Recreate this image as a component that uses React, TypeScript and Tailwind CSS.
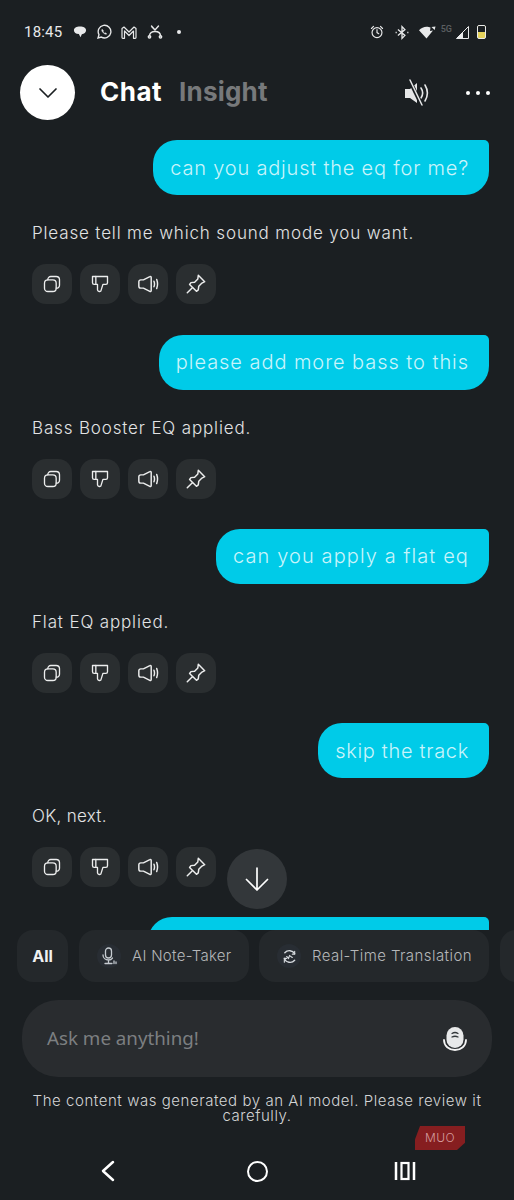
import type { ReactNode } from "react";

const messages = [
  { question: "can you adjust the eq for me?", answer: "Please tell me which sound mode you want.", fit: "tracking-[0.8px]", answerFit: "tracking-[0.85px]" },
  { question: "please add more bass to this", answer: "Bass Booster EQ applied.", fit: "tracking-[0.95px]", answerFit: "tracking-[0.85px]" },
  { question: "can you apply a flat eq", answer: "Flat EQ applied.", fit: "tracking-[1.1px]", answerFit: "tracking-[0.85px]" },
  { question: "skip the track", answer: "OK, next.", fit: "tracking-[0.7px]", answerFit: "tracking-[0.3px]" },
];

function Icon({ size = 20, children }: { size?: number; children: ReactNode }) {
  return (
    <svg
      width={size}
      height={size}
      viewBox="0 0 24 24"
      fill="none"
      stroke="currentColor"
      strokeWidth="1.6"
      strokeLinecap="round"
      strokeLinejoin="round"
    >
      {children}
    </svg>
  );
}

function StatusBar() {
  return (
    <div className="flex h-[65px] items-start justify-between pl-[24px] pr-[28px] pt-[23px] text-[#e8e9ea]">
      <div className="flex h-[18px] items-center">
        <span className="w-[40px] font-['Roboto',sans-serif] text-[15px] leading-[18px] font-normal tracking-[0.2px]">18:45</span>
        <svg width="14" height="14" viewBox="0 0 15 14" fill="currentColor" className="ml-[9px]">
          <path d="M1 5c0-2.600 2.700-4 6.500-4S14 2.500 14 5s-2 4-4.500 4.300L8 12.500 6.300 9.200C3 9 1 7.500 1 5z" />
        </svg>
        <svg width="16" height="16" viewBox="0 0 24 24" fill="none" stroke="currentColor" strokeWidth="2" className="ml-[9px]">
          <path d="M3 21l1.500-5A9.500 9.500 0 1 1 8 19.600L3 21z" />
          <path d="M9 8c-1 1 0 3.500 1.800 5.200S15 16 16 15l-1.700-1.800-1.300.7c-1-.5-1.900-1.400-2.400-2.400l.7-1.300L9 8z" fill="currentColor" strokeWidth="0.8" />
        </svg>
        <svg width="16" height="13" viewBox="0 0 16 13" fill="none" stroke="currentColor" strokeWidth="1.200" strokeLinejoin="round" className="ml-[9px]">
          <path d="M1 2.500L3 1l5 5 5-5 2 1.500V11.500a.8.8 0 0 1-.8.8H12.500V5L8 9.500 3.500 5v7.300H1.800a.8.8 0 0 1-.8-.8z" />
        </svg>
        <svg width="16" height="14" viewBox="0 0 16 14" fill="none" stroke="currentColor" strokeWidth="1.400" strokeLinecap="round" className="ml-[10px]">
          <path d="M4.500 1l3.500 4 3.500-4M8 5L5 2" />
          <path d="M2.500 11c0-3 2.500-4.500 5.500-4.500S13.500 8 13.500 11" />
          <circle cx="2.500" cy="11.800" r="1.200" />
          <circle cx="13.500" cy="11.800" r="1.200" />
        </svg>
        <span className="ml-[14px] h-[4px] w-[4px] rounded-full bg-[#e8e9ea]" />
      </div>
      <div className="flex h-[18px] items-center">
        <svg width="14" height="14" viewBox="0 0 24 24" fill="none" stroke="currentColor" strokeWidth="2" strokeLinecap="round">
          <circle cx="12" cy="13" r="8.500" />
          <path d="M12 8v5l3 2M2.500 6L6 2.500M21.500 6L18 2.500" />
        </svg>
        <svg width="14" height="15" viewBox="0 0 24 24" fill="none" stroke="currentColor" strokeWidth="2.200" className="ml-[11px]">
          <path d="M5 7l12 10-5 5V2l5 5L5 17" />
          <path d="M1 12h2M21 12h2" />
        </svg>
        <svg width="17" height="13" viewBox="0 0 17 13" fill="currentColor" className="ml-[10px]">
          <path d="M0 4.200C2 2 5 .8 7.500.8c1.500 0 3 .2 4 .7L11 5l3-.5L7.500 12.500 0 4.200z" />
          <path d="M12.500 1l4-.5-.8 3.500z" />
        </svg>
        <span className="mb-[6px] ml-[5px] font-['Roboto',sans-serif] text-[9px] leading-[10px] font-medium text-[#5d6062]">5G</span>
        <svg width="13" height="13" viewBox="0 0 13 13" className="ml-[4px]">
          <path d="M12.500 .5V12.500H.5z" fill="none" stroke="currentColor" strokeWidth="1" />
          <path d="M7 12.500V6L.5 12.500z" fill="currentColor" />
        </svg>
        <div className="ml-[8px] flex h-[14px] w-[9px] flex-col overflow-hidden rounded-[2px] border border-[#e8e9ea] bg-[#e5d25b]">
          <div className="h-[6px] bg-[#1b1f22]" />
        </div>
      </div>
    </div>
  );
}

function Header() {
  return (
    <div className="flex h-[55px] items-center pl-[20px] pr-[24px]">
      <div className="flex h-[55px] w-[55px] items-center justify-center rounded-full bg-white text-[#1b1f22]">
        <svg width="20" height="12" viewBox="0 0 20 12" fill="none" stroke="currentColor" strokeWidth="1.700" strokeLinecap="round" strokeLinejoin="round">
          <path d="M2 2l8 8 8-8" />
        </svg>
      </div>
      <span className="mb-[2px] ml-[25px] text-[26px] leading-[30px] font-bold tracking-[0.5px] text-white">Chat</span>
      <span className="mb-[2px] ml-[17px] text-[26px] leading-[30px] font-bold tracking-[0.2px] text-[#77797b]">Insight</span>
      <svg width="30" height="30" viewBox="0 0 30 30" fill="none" className="ml-auto text-[#e6e7e8]">
        <path d="M3 11h5l7-6v20l-7-5H3z" fill="currentColor" />
        <path d="M19 10c2 3 2 7 0 10M23 7c3 5 3 11 0 16" stroke="currentColor" strokeWidth="1.600" strokeLinecap="round" />
        <path d="M7 1l13 27" stroke="#1b1f22" strokeWidth="4" />
        <path d="M8 2l12 25" stroke="currentColor" strokeWidth="1.500" strokeLinecap="round" />
      </svg>
      <div className="ml-[34px] flex items-center gap-[6px]">
        <span className="h-[4px] w-[4px] rounded-full bg-white" />
        <span className="h-[4px] w-[4px] rounded-full bg-white" />
        <span className="h-[4px] w-[4px] rounded-full bg-white" />
      </div>
    </div>
  );
}

function ActionRow() {
  const items = [
    <Icon key="copy" size={20}>
      <rect x="3" y="7" width="14" height="14" rx="4" />
      <path d="M7 7V6.500A3.500 3.500 0 0 1 10.500 3H17a4 4 0 0 1 4 4v6.500a3.500 3.500 0 0 1-4 3.500" />
    </Icon>,
    <Icon key="dislike" size={20}>
      <path d="M3 3h18v7.500a2 2 0 0 1-2 2h-3.500l-2.500 8a2.500 2.500 0 0 1-4-1.500v-6.500H5a2 2 0 0 1-2-2z" />
      <path d="M7 3v9" />
    </Icon>,
    <Icon key="speaker" size={22}>
      <path d="M2 9.500a2 2 0 0 1 2-2h3l7-3.500a1 1 0 0 1 1.500 1v14a1 1 0 0 1-1.500 1l-7-3.500H4a2 2 0 0 1-2-2z" />
      <path d="M18.500 9c.8 2 .8 4 0 6M21.500 7c1.200 3.300 1.200 6.700 0 10" />
    </Icon>,
    <Icon key="pin" size={22}>
      <path d="M14.500 2.500l7 7-3 1.500-3.500 3.500-.5 4-2 1.500-7.500-7.500 1.500-2 4-.5L14 6.500z" />
      <path d="M8 16l-5.500 5.500" />
    </Icon>,
  ];
  return (
    <div className="mt-[19px] flex gap-[8px] pl-[32px]">
      {items.map((item, i) => (
        <div key={i} className="flex h-[40px] w-[40px] items-center justify-center rounded-[14px] bg-[#2a2e30] text-[#eceded]">
          {item}
        </div>
      ))}
    </div>
  );
}

function ChatList() {
  return (
    <div className="relative min-h-0 flex-1 overflow-hidden pt-[20.400px]">
      {messages.map((m) => (
        <div key={m.question} className="mb-[30.250px]">
          <div className="flex justify-end pr-[25px]">
            <div className={`flex h-[55px] items-center rounded-[24px] rounded-tr-[5px] bg-[#00cbe8] pl-[17px] pr-[20px] text-[20px] font-light whitespace-nowrap text-[#c9f4fb] ${m.fit}`}>
              {m.question}
            </div>
          </div>
          <p className={`mt-[26px] pl-[32px] text-[17px] leading-[24px] font-light text-[#e2e3e4] ${m.answerFit}`}>{m.answer}</p>
          <ActionRow />
        </div>
      ))}
      <div className="flex justify-end pr-[25px]">
        <div className="h-[55px] w-[341px] rounded-[24px] rounded-tr-[5px] bg-[#00cbe8]" />
      </div>
      <button className="absolute left-[227px] top-[729px] flex h-[60px] w-[60px] items-center justify-center rounded-full bg-[#33373a] text-white">
        <svg width="26" height="26" viewBox="0 0 26 26" fill="none" stroke="currentColor" strokeWidth="1.700" strokeLinecap="round" strokeLinejoin="round">
          <path d="M13 2v22M2.500 13.500L13 24l10.500-10.500" />
        </svg>
      </button>
    </div>
  );
}

function Chips() {
  return (
    <div className="flex h-[52px] gap-[10px] overflow-hidden pl-[17px]">
      <div className="flex w-[51px] shrink-0 items-center justify-center rounded-[16px] bg-[#24282b] text-[16px] font-bold text-[#f0f1f1]">All</div>
      <div className="ml-[1px] flex w-[170px] shrink-0 items-center rounded-[16px] bg-[#24282b] pl-[18px]">
        <span className="flex h-[24px] w-[24px] items-center justify-center rounded-full bg-[#282d33] text-[#c5cbd0]">
          <svg width="16" height="18" viewBox="0 0 16 18" fill="none" stroke="currentColor" strokeWidth="1.300" strokeLinecap="round">
            <rect x="4.500" y="1" width="6" height="10" rx="3" />
            <path d="M2 8c0 3 2.500 5 5.500 5s3-.5 4-2M7.500 13v3M4 16.500h7M13 14v2.500M15 15v1.500" />
          </svg>
        </span>
        <span className="ml-[11px] text-[15px] font-light tracking-[0.3px] whitespace-nowrap text-[#b5b7b9]">AI Note-Taker</span>
      </div>
      <div className="flex w-[230px] shrink-0 items-center rounded-[16px] bg-[#24282b] pl-[18px]">
        <span className="flex h-[24px] w-[24px] items-center justify-center rounded-full bg-[#282d33] text-[#d6dade]">
          <svg width="15" height="15" viewBox="0 0 16 16" fill="none" stroke="currentColor" strokeWidth="1.500" strokeLinecap="round">
            <path d="M3 4a6.500 6.500 0 0 1 10.500 1M13.500 12a6.500 6.500 0 0 1-11-2" />
            <path d="M5 8l2 2 1-3 3 2" strokeWidth="1.200" />
            <path d="M13.500 2.500V5.500H11M2.500 14v-4H5" strokeWidth="1.200" />
          </svg>
        </span>
        <span className="ml-[11px] text-[15px] font-light tracking-[0.43px] whitespace-nowrap text-[#b5b7b9]">Real-Time Translation</span>
      </div>
      <div className="ml-[1px] w-[40px] shrink-0 rounded-[16px] bg-[#24282b]" />
    </div>
  );
}

function InputBox() {
  return (
    <div className="mx-[22px] mt-[18px] flex h-[77px] items-center justify-between rounded-[36px] bg-[#292c2f] pl-[25px] pr-[25px]">
      <span className="font-['Noto_Sans',sans-serif] text-[18.750px] text-[#7c7f81]">Ask me anything!</span>
      <svg width="24" height="26" viewBox="0 0 24 26" fill="none">
        <rect x="3.500" y="1" width="17" height="21" rx="8.500" fill="#e8e9ea" />
        <path d="M1 14c0 6 5 10 11 10s11-4 11-10" stroke="#f4f4f4" strokeWidth="1.800" strokeLinecap="round" />
        <path d="M9 7.500c2-1.300 4-1.300 6 0M9 11c2-1 4-1 6 0" stroke="#33373a" strokeWidth="1.300" strokeLinecap="round" />
      </svg>
    </div>
  );
}

function NavBar() {
  return (
    <div className="flex h-[58px] items-center text-white">
      <svg width="16" height="22" viewBox="0 0 16 22" fill="none" stroke="currentColor" strokeWidth="2.500" strokeLinecap="round" strokeLinejoin="round" className="ml-[100px]">
        <path d="M13 2L3 11l10 9" />
      </svg>
      <div className="ml-[131px] h-[21px] w-[21px] rounded-full border-[2.500px] border-white" />
      <svg width="22" height="20" viewBox="0 0 22 20" fill="none" stroke="currentColor" strokeWidth="2.500" className="ml-[126px]">
        <path d="M2 1v18M20 1v18" />
        <rect x="7.500" y="2" width="7" height="16" strokeWidth="2.200" />
      </svg>
    </div>
  );
}

export default function App() {
  return (
    <div className="relative flex h-[1200px] w-[514px] flex-col overflow-hidden bg-[#1b1f22] font-['Inter',sans-serif]">
      <StatusBar />
      <Header />
      <ChatList />
      <div className="relative h-[270px] shrink-0 bg-[#1b1f22]">
        <Chips />
        <InputBox />
        <p className="mx-auto mt-[16px] w-[480px] text-center text-[15px] leading-[15px] font-light tracking-[0.55px] text-[#d3d4d5]">
          The content was generated by an AI model. Please review it carefully.
        </p>
        <div className="absolute right-[49px] top-[196px] flex h-[24px] w-[50px] items-center justify-center bg-[#861e20] text-[12px] font-light tracking-[0.5px] text-[#d49c9c] [clip-path:polygon(10%_0,100%_0,100%_70%,84%_100%,0_100%,0_55%)]">
          MUO
        </div>
        <div className="absolute bottom-0 left-0 right-0">
          <NavBar />
        </div>
      </div>
    </div>
  );
}
